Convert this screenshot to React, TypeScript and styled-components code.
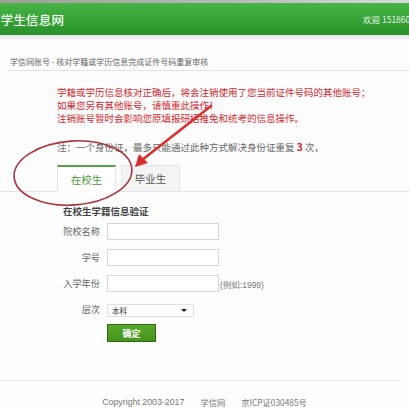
import styled, { createGlobalStyle } from 'styled-components';

const GlobalStyle = createGlobalStyle`
  html, body {
    margin: 0;
    padding: 0;
    background: #fff;
  }
  body {
    font-family: "Noto Sans CJK SC", "Noto Sans", sans-serif;
    width: 409px;
    height: 409px;
    overflow: hidden;
  }
`;

const Page = styled.div`
  position: relative;
  width: 409px;
  height: 409px;
  overflow: hidden;
  background: #fdfdfd;
`;

const TopStrip = styled.div`
  height: 3px;
  background: linear-gradient(to right, #9aa09a, #b8bcb8 60%, #d8dad8);
`;

const Header = styled.div`
  height: 32px;
  display: flex;
  align-items: center;
  justify-content: space-between;
  background: linear-gradient(to bottom, #48b448, #36a336 50%, #2b902b);
  color: #fff;
  overflow: hidden;
`;

const Title = styled.div`
  font-size: 12.5px;
  text-indent: -12px;
  letter-spacing: 0.2px;
  white-space: nowrap;
  text-shadow: 0 0 1px rgba(255, 255, 255, 0.4);
`;

const Welcome = styled.div`
  font-size: 8.5px;
  white-space: nowrap;
  margin-right: -6px;
  color: #e8f5e8;
`;

const Shade = styled.div`
  height: 5px;
  background: linear-gradient(to bottom, #e4e6e4, #f6f6f6);
`;

const Crumb = styled.div`
  margin-left: 8px;
  padding: 16px 0 2px 2px;
  font-size: 8px;
  line-height: 12px;
  color: #666;
  border-bottom: 1px solid #e2e2e2;
  white-space: nowrap;
`;

const Notice = styled.div`
  margin: 15px 0 0 57px;
  font-size: 9.5px;
  line-height: 13px;
  color: #d0282e;
  white-space: nowrap;
`;

const Note = styled.div`
  margin: 15px 0 0 57px;
  font-size: 9.5px;
  line-height: 13px;
  color: #666;
  white-space: nowrap;

  b {
    color: #c8242a;
    font-size: 10px;
  }
`;

const TabBar = styled.div`
  margin-top: 10px;
  display: flex;
  align-items: flex-end;
  padding-left: 57px;
  gap: 5px;
  border-bottom: 1px solid #e4e4e4;
  height: 27px;
`;

const Tab = styled.div<{ $active?: boolean }>`
  width: 59px;
  height: ${(p) => (p.$active ? '27px' : '26px')};
  display: flex;
  align-items: center;
  justify-content: center;
  font-size: 10.5px;
  box-sizing: border-box;
  color: ${(p) => (p.$active ? '#4a9a3a' : '#555')};
  background: ${(p) => (p.$active ? '#fff' : '#f4f4f4')};
  border: 1px solid #e4e4e4;
  border-top: ${(p) => (p.$active ? '2px solid #5c9c4c' : '1px solid #e4e4e4')};
  border-bottom: ${(p) => (p.$active ? '1px solid #fff' : 'none')};
  margin-bottom: ${(p) => (p.$active ? '-1px' : '0')};
`;

const FormTitle = styled.div`
  margin: 12px 0 0 63px;
  font-size: 9.5px;
  font-weight: bold;
  line-height: 14px;
  color: #444;
`;

const Form = styled.div`
  margin: 5px 0 0 57px;
  display: grid;
  grid-template-columns: 43px auto;
  column-gap: 7px;
  row-gap: 9px;
  align-items: center;
`;

const Label = styled.div`
  text-align: right;
  font-size: 9.2px;
  line-height: 13px;
  color: #666;
  white-space: nowrap;
`;

const Field = styled.div`
  display: flex;
  align-items: center;
  gap: 1px;
`;

const Input = styled.input`
  display: block;
  width: 112px;
  height: 17px;
  box-sizing: border-box;
  border: 1px solid #d6d6d6;
  background: #fff;
  padding: 0 3px;
  font-size: 9px;
  outline: none;
`;

const Hint = styled.span`
  font-size: 8.5px;
  color: #777;
  font-family: "Liberation Sans", "Noto Sans CJK SC", sans-serif;
`;

const SelectWrap = styled.div`
  position: relative;
  width: 87px;
  height: 13px;
  margin-top: 3px;
`;

const Select = styled.select`
  display: block;
  appearance: none;
  width: 87px;
  height: 13px;
  box-sizing: border-box;
  border: 1px solid #e0e0e0;
  border-radius: 1px;
  background: #fff;
  padding: 0 4px;
  font-size: 7.5px;
  line-height: 11px;
  color: #333;
  font-family: "Noto Sans CJK SC", sans-serif;
  outline: none;
`;

const Caret = styled.span`
  position: absolute;
  right: 7px;
  top: 5px;
  width: 0;
  height: 0;
  border-left: 3px solid transparent;
  border-right: 3px solid transparent;
  border-top: 3px solid #222;
  pointer-events: none;
`;

const Button = styled.button`
  display: block;
  width: 49px;
  height: 18px;
  margin-top: -2px;
  border: 1px solid #2e6a12;
  background: linear-gradient(to bottom, #58a82a, #46941c);
  color: #fff;
  font-size: 9px;
  font-weight: bold;
  font-family: "Noto Sans CJK SC", sans-serif;
  padding: 0;
`;

const Footer = styled.div`
  margin: 38px 9px 0 0;
  border-top: 1px solid #e6e6e6;
  padding-top: 15px;
  display: flex;
  justify-content: center;
  gap: 16px;
  font-size: 8.3px;
  line-height: 12px;
  color: #777;
  padding-left: 9px;
  white-space: nowrap;
`;

const Copy = styled.span`
  font-family: "Liberation Sans", "Noto Sans CJK SC", sans-serif;
  font-size: 8.8px;
`;

const Annotation = styled.svg`
  position: absolute;
  left: 0;
  top: 0;
  width: 409px;
  height: 409px;
  pointer-events: none;
`;

export default function App() {
  return (
    <>
      <GlobalStyle />
      <Page>
        <TopStrip />
        <Header>
          <Title>高学生信息网</Title>
          <Welcome>欢迎 1518608</Welcome>
        </Header>
        <Shade />
        <Crumb>学信网账号 - 核对学籍或学历信息完成证件号码重复审核</Crumb>
        <Notice>
          学籍或学历信息核对正确后，将会注销使用了您当前证件号码的其他账号；
          <br />
          如果您另有其他账号，请慎重此操作！
          <br />
          注销账号暂时会影响您原填报研招推免和统考的信息操作。
        </Notice>
        <Note>
          注：一个身份证，最多只能通过此种方式解决身份证重复 <b>3</b> 次，
        </Note>
        <TabBar>
          <Tab $active>在校生</Tab>
          <Tab>毕业生</Tab>
        </TabBar>
        <FormTitle>在校生学籍信息验证</FormTitle>
        <Form>
          <Label>院校名称</Label>
          <Field>
            <Input />
          </Field>
          <Label>学号</Label>
          <Field>
            <Input />
          </Field>
          <Label>入学年份</Label>
          <Field>
            <Input />
            <Hint>(例如:1999)</Hint>
          </Field>
          <Label>层次</Label>
          <Field>
            <SelectWrap>
              <Select defaultValue="本科">
                <option>本科</option>
                <option>专科</option>
              </Select>
              <Caret />
            </SelectWrap>
          </Field>
          <span />
          <Field>
            <Button>确定</Button>
          </Field>
        </Form>
        <Footer>
          <Copy>Copyright 2003-2017</Copy>
          <span>学信网</span>
          <span>京ICP证030485号</span>
        </Footer>

        {/* red hand-drawn markup over the screenshot */}
        <Annotation viewBox="0 0 409 409">
          <ellipse
            cx="73"
            cy="173"
            rx="59"
            ry="32"
            fill="none"
            stroke="#a8363c"
            strokeWidth="1.6"
            transform="rotate(-4 73 173)"
          />
          <line x1="211" y1="106" x2="142" y2="160" stroke="#d8302e" strokeWidth="2.6" strokeLinecap="round" />
          <polygon points="135,167 139,154 148,163" fill="#d8302e" />
        </Annotation>
      </Page>
    </>
  );
}
